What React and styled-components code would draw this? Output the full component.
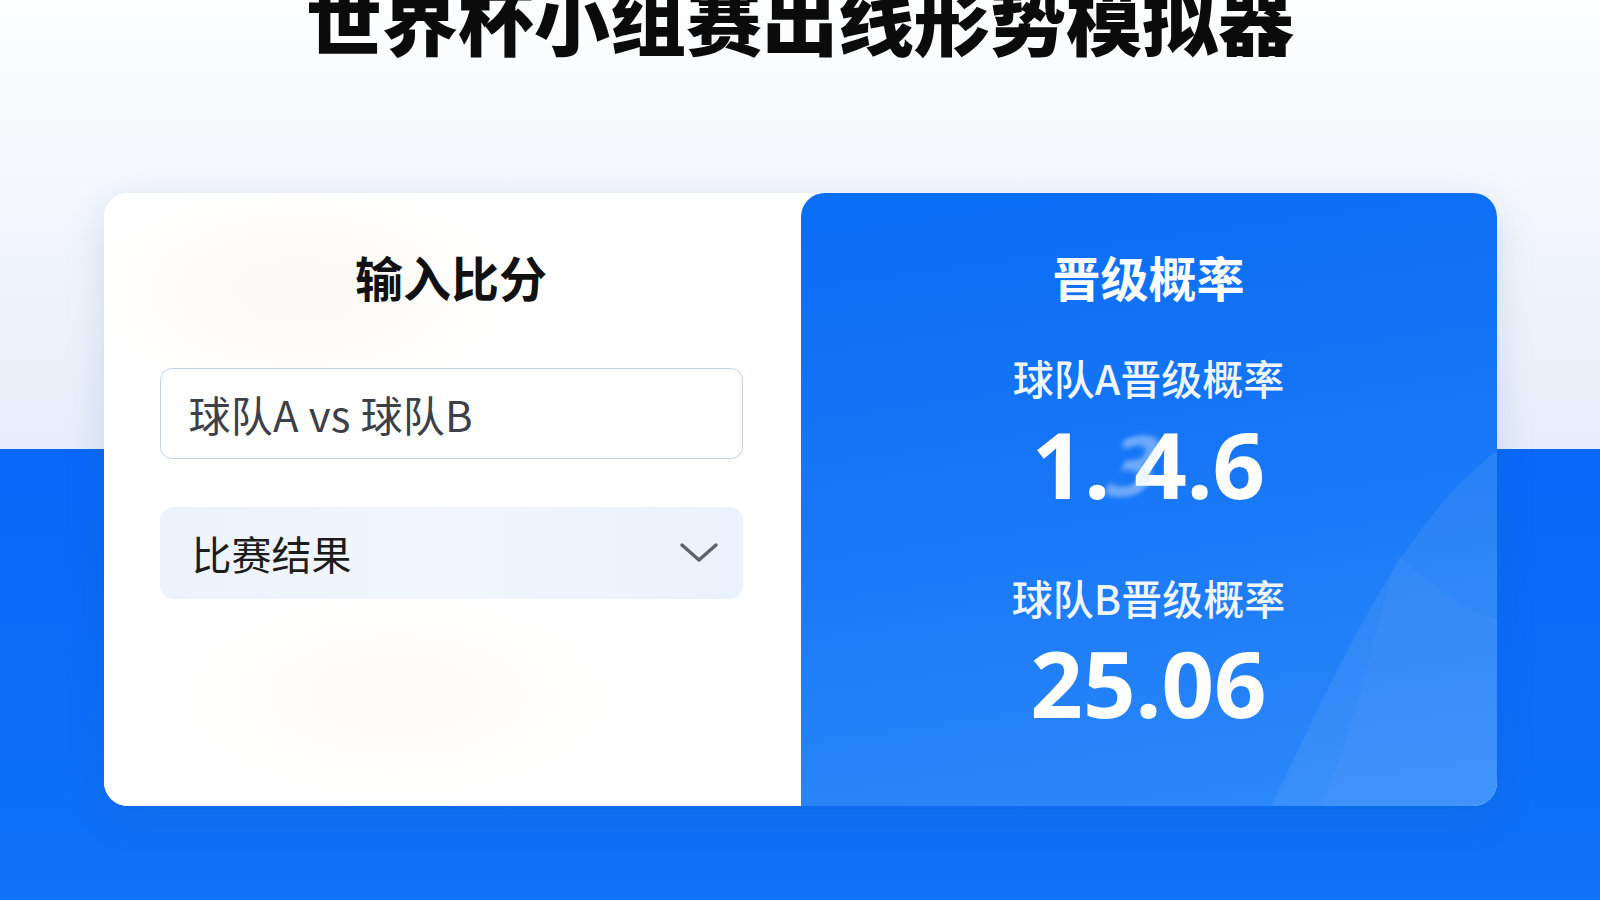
import React from 'react';
import styled, { createGlobalStyle } from 'styled-components';

const GlobalStyle = createGlobalStyle`
    html, body {
        margin: 0;
        padding: 0;
    }
    body {
        font-family: "Noto Sans CJK SC", "Noto Sans", sans-serif;
    }
`;

const Page = styled.div`
    min-height: 900px;
    overflow: hidden;
    display: flex;
    flex-direction: column;
    align-items: center;
    background: linear-gradient(180deg, #fdfeff 0px, #f4f7fc 200px, #e6eefa 449px, #0868f7 449px, #0b6df8 700px, #0f72f8 900px);
`;

const Title = styled.h1`
    margin: -21px 0 0;
    font-size: 76px;
    line-height: 76px;
    font-weight: 900;
    color: #0b0b0b;
`;

const Card = styled.div`
    margin-top: 138px;
    width: 1393px;
    height: 613px;
    display: grid;
    grid-template-columns: 697px 696px;
    border-radius: 24px;
    overflow: hidden;
    background: #ffffff;
    box-shadow: 0 12px 40px rgba(30, 70, 150, 0.14);
`;

const InputPane = styled.div`
    padding: 59px 58px 0 56px;
    background:
        radial-gradient(ellipse 300px 150px at 28% 16%, rgba(250, 245, 237, 0.5), transparent 75%),
        radial-gradient(ellipse 320px 150px at 42% 82%, rgba(250, 246, 240, 0.4), transparent 75%),
        #ffffff;
`;

const PaneTitle = styled.h2`
    margin: 0;
    text-align: center;
    font-size: 48px;
    line-height: 48px;
    font-weight: 700;
    color: ${p => (p.light ? '#ffffff' : '#111111')};
`;

const ScoreInput = styled.input`
    box-sizing: border-box;
    display: block;
    width: 100%;
    height: 91px;
    margin-top: 68px;
    padding: 0 28px;
    border: 1.5px solid #c3d3e8;
    border-radius: 12px;
    background: #ffffff;
    font-family: "Noto Sans CJK SC", sans-serif;
    font-size: 42px;
    letter-spacing: 0.3px;
    color: #3b4049;
    outline: none;
`;

const Select = styled.div`
    box-sizing: border-box;
    height: 92px;
    margin-top: 48px;
    padding: 0 24px 0 32px;
    display: flex;
    align-items: center;
    justify-content: space-between;
    border-radius: 14px;
    background: linear-gradient(90deg, #edf3fb 0%, #f2f6fc 50%, #eaf2fd 100%);
    font-size: 40px;
    color: #1c1c1c;
`;

const ResultPane = styled.div`
    position: relative;
    padding-top: 59px;
    text-align: center;
    border-top-left-radius: 24px;
    overflow: hidden;
    background: linear-gradient(172deg, #0a6df6 0%, #1676f6 45%, #2d89fa 100%);
`;

const Decor = styled.svg`
    position: absolute;
    right: 0;
    bottom: 0;
    pointer-events: none;
`;

const Content = styled.div`
    position: relative;
`;

const StatLabel = styled.div`
    margin-top: ${p => p.gap}px;
    font-size: 41px;
    line-height: 40px;
    font-weight: 500;
    color: rgba(255, 255, 255, 0.95);
`;

const StatValue = styled.div`
    margin-top: ${p => p.gap}px;
    font-family: "Noto Sans", sans-serif;
    font-size: 92px;
    line-height: 92px;
    font-weight: 700;
    color: #ffffff;
`;

const Ghost = styled.span`
    display: inline-block;
    width: 0.3em;
    margin-right: -0.04em;
    opacity: 0.45;
    filter: blur(3px);
    transform: skewX(-18deg) scale(0.9);
    color: #dbe9ff;
`;

const Chevron = () => (
    <svg width="40" height="24" viewBox="0 0 40 24">
        <path d="M3 4 L20 19 L37 4" fill="none" stroke="#5b6371" strokeWidth="3.5" strokeLinecap="round" strokeLinejoin="round" />
    </svg>
);

export default function App() {
    return (
        <Page>
            <GlobalStyle />
            <Title>世界杯小组赛出线形势模拟器</Title>
            <Card>
                <InputPane>
                    <PaneTitle>输入比分</PaneTitle>
                    <ScoreInput readOnly value="球队A vs 球队B" />
                    <Select>
                        <span>比赛结果</span>
                        <Chevron />
                    </Select>
                </InputPane>
                <ResultPane>
                    <Decor width="696" height="613" viewBox="0 0 696 613">
                        <path d="M470 613 C 540 470, 600 330, 696 258 L 696 613 Z" fill="rgba(255,255,255,0.07)" />
                        <path d="M596 360 C 630 392, 665 420, 696 426 L 696 613 L 520 613 C 560 520, 575 430, 596 360 Z" fill="rgba(255,255,255,0.03)" />
                    </Decor>
                    <Content>
                        <PaneTitle light>晋级概率</PaneTitle>
                        <StatLabel gap={57}>球队A晋级概率</StatLabel>
                        <StatValue gap={21}>1.<Ghost>3</Ghost>4.6</StatValue>
                        <StatLabel gap={67}>球队B晋级概率</StatLabel>
                        <StatValue gap={20}>25.06</StatValue>
                    </Content>
                </ResultPane>
            </Card>
        </Page>
    );
}
